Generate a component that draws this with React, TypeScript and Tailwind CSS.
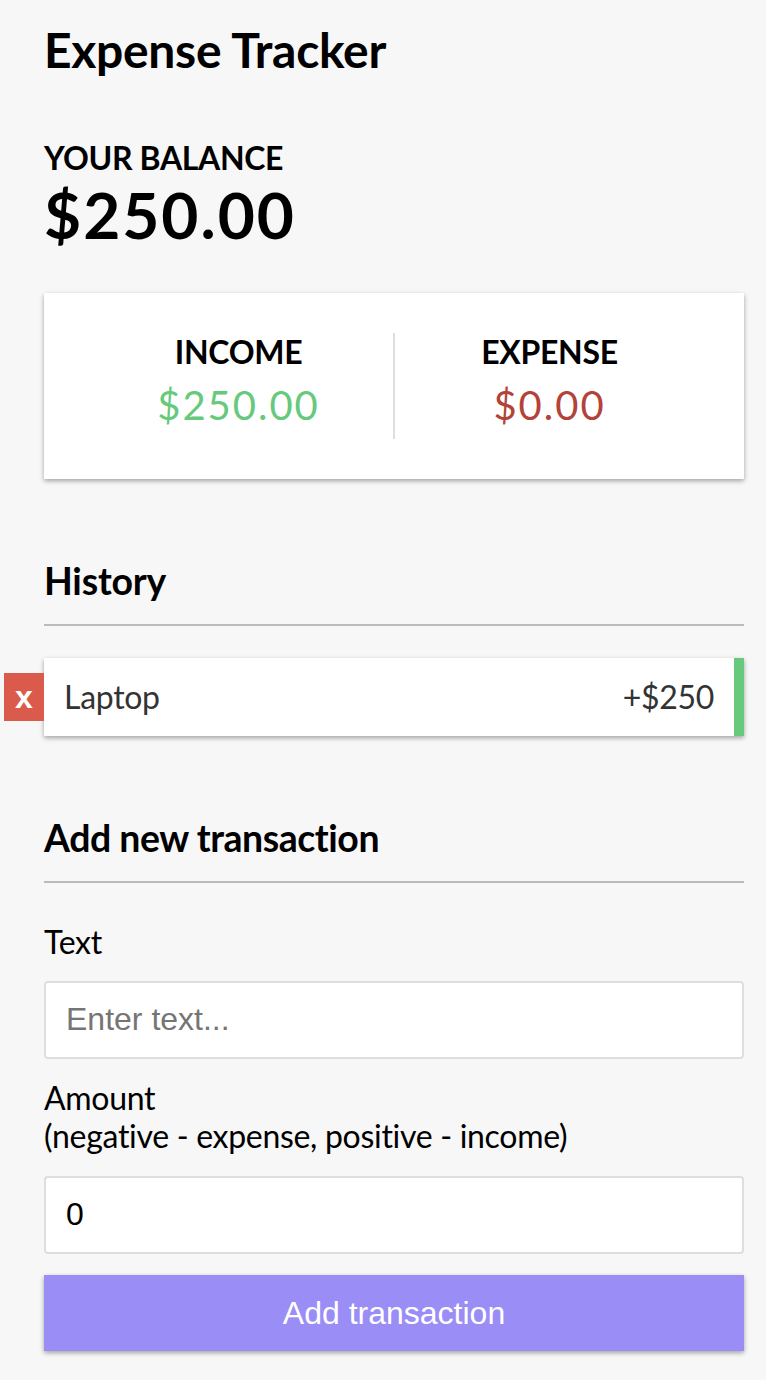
import { useState } from "react";

type Transaction = { id: number; text: string; amount: number };

const App = () => {
  const [transactions] = useState<Transaction[]>([
    { id: 1, text: "Laptop", amount: 250 },
  ]);
  const [text, setText] = useState("");
  const [amount, setAmount] = useState("0");

  const amounts = transactions.map((t) => t.amount);
  const total = amounts.reduce((a, b) => a + b, 0).toFixed(2);
  const income = amounts.filter((a) => a > 0).reduce((a, b) => a + b, 0).toFixed(2);
  const expense = Math.abs(amounts.filter((a) => a < 0).reduce((a, b) => a + b, 0)).toFixed(2);

  return (
    <div className="min-h-screen bg-[#f7f7f7] font-['Lato',sans-serif] text-black tracking-[-0.3px]">
      <div className="ml-[44px] w-[700px] pt-[21px] pb-[60px]">
        <h2 className="text-[48px] leading-[1.2] font-bold tracking-[-0.3px]">Expense Tracker</h2>

        {/* balance */}
        <div className="mt-[60px]">
          <h4 className="text-[32px] leading-[1.2] font-bold uppercase tracking-[-0.35px]">Your Balance</h4>
          <h1 className="text-[64px] leading-[1.2] font-bold tracking-[2px]">${total}</h1>
        </div>

        {/* income / expense */}
        <div className="mt-[39px] flex bg-white p-[40px] shadow-[0_2px_6px_rgba(0,0,0,0.12),0_2px_4px_rgba(0,0,0,0.24)]">
          <div className="flex-1 text-center border-r-2 border-[#dedede]">
            <h4 className="text-[32px] leading-[1.2] font-bold uppercase">Income</h4>
            <p className="my-[10px] text-[40px] leading-[1.2] tracking-[2px] text-[#66c97b]">${income}</p>
          </div>
          <div className="flex-1 text-center">
            <h4 className="text-[32px] leading-[1.2] font-bold uppercase">Expense</h4>
            <p className="my-[10px] text-[40px] leading-[1.2] tracking-[2px] text-[#b3433a]">${expense}</p>
          </div>
        </div>

        <h3 className="mt-[80px] border-b-2 border-[#bbb] pb-[20px] text-[37.44px] leading-[1.2] font-bold tracking-[-0.2px]">
          History
        </h3>
        <ul>
          {transactions.map((t) => (
            <li
              key={t.id}
              className={
                "relative mt-[32px] flex justify-between bg-white p-[20px] border-r-[10px] text-[32px] leading-[1.2] text-[#333] shadow-[0_2px_6px_rgba(0,0,0,0.12),0_2px_4px_rgba(0,0,0,0.24)] " +
                (t.amount < 0 ? "border-[#b3433a]" : "border-[#66c97b]")
              }
            >
              {t.text}
              <span>
                {t.amount < 0 ? "-" : "+"}${Math.abs(t.amount)}
              </span>
              <button className="absolute left-0 top-1/2 flex h-[48px] w-[40px] -translate-x-full -translate-y-1/2 items-center justify-center bg-[#da5a4b] font-['Liberation_Sans',sans-serif] text-[32px] leading-none font-bold text-white tracking-normal">
                x
              </button>
            </li>
          ))}
        </ul>

        <h3 className="mt-[80px] border-b-2 border-[#bbb] pb-[20px] text-[37.44px] leading-[1.2] font-bold tracking-[-0.45px]">
          Add new transaction
        </h3>
        <form onSubmit={(e) => e.preventDefault()}>
          <div>
            <label className="mt-[40px] block text-[32px] leading-[1.2]">Text</label>
            <input
              type="text"
              value={text}
              onChange={(e) => setText(e.target.value)}
              placeholder="Enter text..."
              className="mt-[19px] block h-[78px] w-full rounded-[4px] border-2 border-[#dedede] bg-white px-[20px] font-['Liberation_Sans',sans-serif] text-[32px] tracking-normal text-black placeholder:text-[#757575] outline-none"
            />
          </div>
          <div>
            <label className="mt-[20px] block text-[32px] leading-[1.2]">
              Amount <br />
              (negative - expense, positive - income)
            </label>
            <input
              type="number"
              value={amount}
              onChange={(e) => setAmount(e.target.value)}
              placeholder="Enter amount..."
              className="mt-[20px] block h-[78px] w-full rounded-[4px] border-2 border-[#dedede] bg-white px-[20px] font-['Liberation_Sans',sans-serif] text-[32px] tracking-normal text-black placeholder:text-[#757575] outline-none"
            />
          </div>
          <button className="mt-[21px] block h-[76px] w-full bg-[#9b8df6] font-['Liberation_Sans',sans-serif] text-[32px] tracking-normal text-white shadow-[0_2px_6px_rgba(0,0,0,0.12),0_2px_4px_rgba(0,0,0,0.24)]">
            Add transaction
          </button>
        </form>
      </div>
    </div>
  );
};

export default App;
